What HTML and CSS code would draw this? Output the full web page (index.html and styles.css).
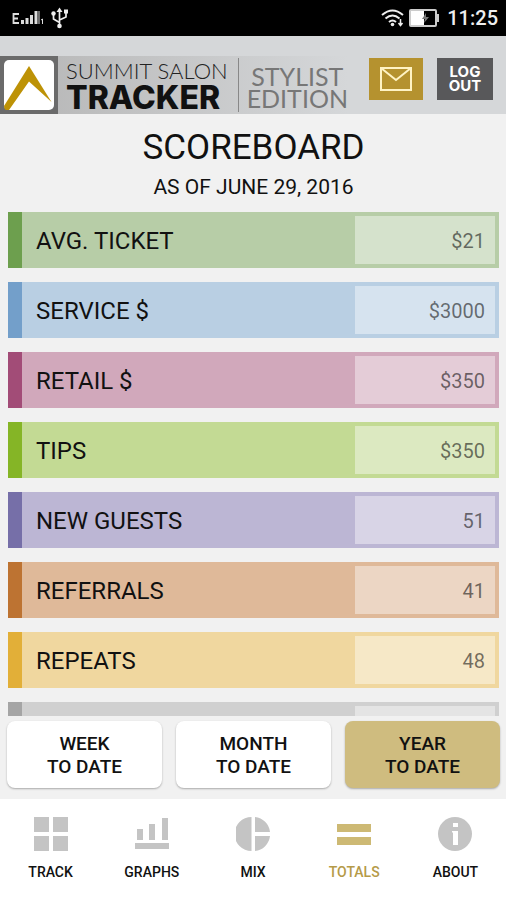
FILE: index.html
```html
<!DOCTYPE html>
<html lang="en">
<head>
  <meta charset="UTF-8" />
  <meta name="viewport" content="width=device-width, initial-scale=1.0"/>
  <title>Scoreboard</title>
  <link rel="stylesheet" href="styles.css">
</head>
<body>
  <div class="app">
    <!-- status bar -->
    <div class="status-bar">
      <svg class="signal" width="32" height="20" viewBox="0 0 32 20" fill="none" stroke="#ddd">
        <path d="M7 6H1.500v9H7M1.500 10.500H6" stroke-width="1.800"/>
        <path d="M10.500 16v-4M15 16v-6M19.500 16V7M24 16V3" stroke-width="3"/>
        <path d="M27 3v13M29 12l1.500-1v5" stroke-width="1"/>
      </svg>
      <svg width="20" height="22" viewBox="0 0 20 22" fill="none" stroke="#eee" stroke-width="1.700">
        <path d="M9.500 4v15M9.500 15.500L3.500 12V7M9.500 13l6.500-3V6"/>
        <path d="M9.500 0.500L6.500 5h6z" fill="#eee" stroke="none"/>
        <circle cx="9.500" cy="19" r="2.300" fill="#eee" stroke="none"/>
        <circle cx="3.500" cy="6.500" r="2.200" fill="#eee" stroke="none"/>
        <rect x="14" y="2.500" width="4" height="4" fill="#eee" stroke="none"/>
      </svg>
      <div class="status-right">
        <svg width="24" height="18" viewBox="0 0 24 18" fill="none" stroke="#eee" stroke-width="2">
          <path d="M1 6Q11.500-3 22 6M4.500 9.500Q11.500 3.500 18.500 9.500M8 13Q11.500 10 15 13"/>
          <circle cx="11.500" cy="15.500" r="1.800" fill="#eee" stroke="none"/>
          <path d="M19.500 10v6M17.500 14l2 2.500 2-2.500" stroke-width="1.500"/>
        </svg>
        <svg width="30" height="18" viewBox="0 0 30 18">
          <rect x="1" y="1" width="26" height="16" rx="1" fill="#000" stroke="#ccc" stroke-width="2"/>
          <rect x="2" y="2" width="13" height="14" fill="#fff"/>
          <path d="M17 4l-4 6h3l-1 4 5-6h-3z" fill="#777"/>
          <rect x="28" y="5" width="2" height="8" fill="#ccc"/>
        </svg>
        <span class="clock">11:25</span>
      </div>
    </div>

    <header class="header">
      <div class="brand">
        <svg class="logo" width="58" height="58" viewBox="0 0 58 58">
          <rect width="58" height="58" fill="#6b6b6b"/>
          <rect x="4" y="4" width="50" height="50" rx="5" fill="#fff"/>
          <path d="M29 10l22.500 36L29 25.500 9 54H6q-2-1-2-4z" fill="#bd9206"/>
        </svg>
        <div class="brand-name">
          <span class="brand-top">SUMMIT SALON</span>
          <span class="brand-main">TRACKER</span>
        </div>
        <div class="edition">STYLIST<br>EDITION</div>
      </div>
      <div class="header-buttons">
        <button class="mail-btn" aria-label="Mail">
          <svg width="34" height="24" viewBox="0 0 34 24" fill="none" stroke="#fff3c4" stroke-width="2">
            <rect x="2" y="1" width="30" height="22"/>
            <path d="M2 1l15 12L32 1"/>
          </svg>
        </button>
        <button class="logout-btn">LOG<br>OUT</button>
      </div>
    </header>

    <main class="content">
      <h1>SCOREBOARD</h1>
      <p class="date">AS OF JUNE 29, 2016</p>

      <div class="scores">
        <div class="row green">
          <label for="avgTicket">AVG. TICKET</label>
          <input type="text" id="avgTicket" value="$21" readonly />
        </div>
        <div class="row blue">
          <label for="service">SERVICE $</label>
          <input type="text" id="service" value="$3000" readonly />
        </div>
        <div class="row pink">
          <label for="retail">RETAIL $</label>
          <input type="text" id="retail" value="$350" readonly />
        </div>
        <div class="row lime">
          <label for="tips">TIPS</label>
          <input type="text" id="tips" value="$350" readonly />
        </div>
        <div class="row purple">
          <label for="newGuests">NEW GUESTS</label>
          <input type="text" id="newGuests" value="51" readonly />
        </div>
        <div class="row orange">
          <label for="referrals">REFERRALS</label>
          <input type="text" id="referrals" value="41" readonly />
        </div>
        <div class="row yellow">
          <label for="repeats">REPEATS</label>
          <input type="text" id="repeats" value="48" readonly />
        </div>
        <div class="row gray">
          <span class="empty-value"></span>
        </div>
      </div>
    </main>

    <div class="periods">
      <button class="period-btn">WEEK<br>TO DATE</button>
      <button class="period-btn">MONTH<br>TO DATE</button>
      <button class="period-btn active">YEAR<br>TO DATE</button>
    </div>

    <nav class="tabs">
      <a href="#track">
        <svg width="34" height="34" viewBox="0 0 34 34" fill="currentColor">
          <path d="M0 0h15v15H0zM19 0h15v15H19zM0 19h15v15H0zM19 19h15v15H19z"/>
        </svg>
        <span>TRACK</span>
      </a>
      <a href="#graphs">
        <svg width="34" height="34" viewBox="0 0 34 34" fill="currentColor">
          <path d="M2 12h6v11H2zM14 7h6v16h-6zM27 1h6v22h-6zM0 26h34v6H0z"/>
        </svg>
        <span>GRAPHS</span>
      </a>
      <a href="#mix">
        <svg width="34" height="34" viewBox="0 0 34 34" fill="currentColor">
          <path d="M15.500 0v34A17 17 0 0 1 15.500 0zM19 0A17 17 0 0 1 34 15H19zM19 19h15A17 17 0 0 1 19 34z"/>
        </svg>
        <span>MIX</span>
      </a>
      <a href="#totals" class="active">
        <svg width="34" height="34" viewBox="0 0 34 34" fill="currentColor">
          <path d="M0 7h34v8H0zM0 20h34v8H0z"/>
        </svg>
        <span>TOTALS</span>
      </a>
      <a href="#about">
        <svg width="34" height="34" viewBox="0 0 34 34">
          <circle cx="17" cy="17" r="17" fill="currentColor"/>
          <path d="M15 6h5v4h-5zM14 14h6v14h-5V15.500h-1z" fill="#fff"/>
        </svg>
        <span>ABOUT</span>
      </a>
    </nav>
  </div>
</body>
</html>
```

FILE: styles.css
```css
* {
  box-sizing: border-box;
}

body {
  margin: 0;
  font-family: Roboto, 'Liberation Sans', sans-serif;
  background-color: #f1f1f1;
  color: #111;
}

button {
  border: none;
  padding: 0;
  font-family: inherit;
  cursor: pointer;
}

.app {
  height: 100vh;
  display: flex;
  flex-direction: column;
}

/* status bar */
.status-bar {
  display: flex;
  align-items: center;
  gap: 6px;
  padding: 0 8px 0 12px;
  height: 36px;
  background-color: #000;
}

.status-right {
  margin-left: auto;
  display: flex;
  align-items: center;
  gap: 4px;
}

.clock {
  margin-left: 4px;
  color: #eee;
  font-size: 20px;
  font-weight: 500;
}

/* header */
.header {
  display: flex;
  align-items: flex-end;
  justify-content: space-between;
  height: 78px;
  padding-right: 13px;
  background-color: #d5d7d9;
}

.brand {
  display: flex;
  align-items: center;
  height: 58px;
  background: linear-gradient(to right, #b5b5b5, #d5d7d9);
}

.brand-name {
  display: flex;
  flex-direction: column;
  gap: 2px;
  margin-left: 8px;
  padding: 2px 10px 0 0;
  border-right: 1px solid #888;
}

.brand-top {
  font-family: Lato, sans-serif;
  font-size: 22px;
  line-height: 22px;
  font-weight: 300;
  color: #222;
}

.brand-main {
  font-family: Inter, sans-serif;
  font-size: 32px;
  line-height: 28px;
  font-weight: 800;
}

.edition {
  margin-left: 8px;
  padding-top: 4px;
  font-family: Lato, sans-serif;
  font-size: 25px;
  line-height: 22px;
  text-align: center;
  color: #777;
}

.header-buttons {
  display: flex;
  gap: 14px;
  margin-bottom: 14px;
}

.mail-btn {
  display: flex;
  align-items: center;
  justify-content: center;
  width: 54px;
  height: 42px;
  background-color: #b5922f;
}

.logout-btn {
  width: 56px;
  height: 42px;
  background-color: #58585a;
  color: #fff;
  font-family: Inter, sans-serif;
  font-size: 15px;
  line-height: 14px;
  font-weight: 700;
}

/* scoreboard */
.content {
  flex: 1;
  min-height: 0;
  display: flex;
  flex-direction: column;
  padding: 0 7px 0 8px;
}

h1 {
  margin: 13px 0 0;
  font-size: 35px;
  line-height: 42px;
  font-weight: 400;
  text-align: center;
}

.date {
  margin: 5px 0 12px;
  font-size: 21px;
  line-height: 26px;
  text-align: center;
}

.scores {
  flex: 1;
  min-height: 0;
  display: flex;
  flex-direction: column;
  gap: 14px;
  overflow-y: auto;
  scrollbar-width: none;
}

.row {
  flex: none;
  display: flex;
  align-items: center;
  height: 56px;
  padding: 4px 4px 4px 14px;
  border-left: 14px solid;
}

.row label {
  flex: 1;
  padding-top: 2px;
  font-size: 24px;
}

.row input,
.empty-value {
  width: 140px;
  height: 48px;
  margin-left: auto;
  padding: 2px 10px 0;
  border: none;
  outline: none;
  background-color: rgba(255, 255, 255, 0.42);
  color: rgba(0, 0, 0, 0.55);
  font-family: inherit;
  font-size: 20px;
  text-align: right;
}

.green {
  background-color: #b7cda7;
  border-color: #6d9f4e;
}

.blue {
  background-color: #b9cfe3;
  border-color: #739fca;
}

.pink {
  background-color: #d1a8bb;
  border-color: #a24c77;
}

.lime {
  background-color: #c3da94;
  border-color: #85b526;
}

.purple {
  background-color: #bcb6d4;
  border-color: #766fa8;
}

.orange {
  background-color: #dfb999;
  border-color: #bd7332;
}

.yellow {
  background-color: #f0d79f;
  border-color: #e2af38;
}

.gray {
  background-color: #d0d0d0;
  border-color: #a5a5a5;
}

/* period buttons */
.periods {
  display: flex;
  gap: 14px;
  padding: 5px 6px 11px 7px;
}

.period-btn {
  flex: 1;
  height: 67px;
  border-radius: 8px;
  background-color: #fff;
  box-shadow: 0 1px 2px rgba(0, 0, 0, 0.3);
  color: #111;
  font-size: 19px;
  line-height: 23px;
  font-weight: 500;
}

.period-btn.active {
  background-color: #cfbc7f;
}

/* bottom tabs */
.tabs {
  display: flex;
  height: 101px;
  padding-top: 18px;
  background-color: #fff;
}

.tabs a {
  flex: 1;
  display: flex;
  flex-direction: column;
  align-items: center;
  gap: 12px;
  color: #c4c4c4;
  text-decoration: none;
}

.tabs span {
  color: #111;
  font-size: 14px;
  line-height: 18px;
  font-weight: 500;
}

.tabs a.active {
  color: #cdb974;
}

.tabs a.active span {
  color: #b59a48;
}
```
